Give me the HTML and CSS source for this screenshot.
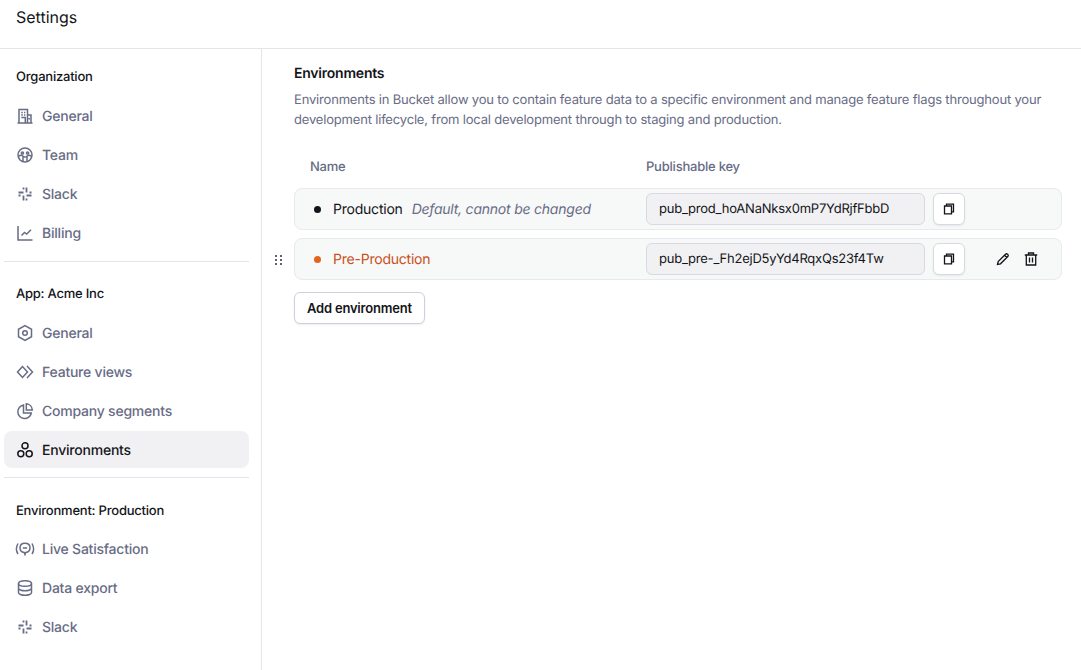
FILE: index.html
```html
<!DOCTYPE html>
<html lang="en">
<head>
  <meta charset="UTF-8" />
  <title>Settings</title>
  <link rel="stylesheet" href="styles.css">
</head>
<body>
  <header class="top-bar">Settings</header>

  <div class="layout">
    <nav class="sidebar">
      <div class="nav-section first">
        <h3>Organization</h3>
        <a class="nav-item">
          <svg class="icon" viewBox="0 0 16 16"><path d="M.5 15h15M2 15V1.500h8.500V15M10.500 7H14v8M4.300 4.500h1.500M7 4.500h1.300M4.300 7h1.500M7 7h1.300M4.300 9.500h4v5.500M12.200 10v1.500"/></svg>
          General
        </a>
        <a class="nav-item">
          <svg class="icon" viewBox="0 0 16 16"><circle cx="8" cy="8" r="7"/><circle cx="5.400" cy="6" r="1.100"/><circle cx="10.600" cy="6" r="1.100"/><path d="M1.500 9.500c1.500-1.400 3.300-1.400 4.500-.4.600.5 1 .9 2 .9s1.400-.4 2-.9c1.200-1 3-1 4.500.4M6 9.300v5.200M10 9.300v5.200"/></svg>
          Team
        </a>
        <a class="nav-item">
          <svg class="icon slack" viewBox="0 0 16 16"><path d="M1.500 6.500h5M6.500 1.500v2M9.500 1.500v5M14.500 6.500h-2M14.500 9.500h-5M9.500 14.500v-2M6.500 14.500v-5M1.500 9.500h2"/></svg>
          Slack
        </a>
        <a class="nav-item">
          <svg class="icon" viewBox="0 0 16 16"><path d="M1 1v14h14.500M4.500 10.500l3-3 2.200 1.500 4.300-4.300"/></svg>
          Billing
        </a>
      </div>

      <div class="nav-section app">
        <h3>App: Acme Inc</h3>
        <a class="nav-item">
          <svg class="icon" viewBox="0 0 16 16"><path d="M8 .6l6.500 3.700v7.400L8 15.400l-6.500-3.700V4.300z"/><circle cx="8" cy="8" r="2.300"/></svg>
          General
        </a>
        <a class="nav-item">
          <svg class="icon" viewBox="0 0 16 16"><path d="M5.500 2.500L.5 8l5 5.500L10.500 8zM10 2l5.500 6-5.500 6"/></svg>
          Feature views
        </a>
        <a class="nav-item">
          <svg class="icon" viewBox="0 0 16 16"><path d="M6.500 2a6.800 6.800 0 1 0 7.800 8H6.500zM9.300.8a6.500 6.500 0 0 1 6 6.200h-6z"/></svg>
          Company segments
        </a>
        <a class="nav-item active">
          <svg class="icon" viewBox="0 0 16 16"><circle cx="8" cy="3.800" r="3"/><circle cx="3.800" cy="11.800" r="3"/><circle cx="12.200" cy="11.800" r="3"/></svg>
          Environments
        </a>
      </div>

      <div class="nav-section last">
        <h3>Environment: Production</h3>
        <a class="nav-item">
          <svg class="icon" viewBox="0 0 16 16"><path d="M1 2.500C-1 6-1 10 1 13M15 2.500c2 3.500 2 7.500 0 10.500M8 2.200c-3 0-5 1.900-5 4.600 0 2.500 1.800 4.400 4.200 4.700l.8 2 .8-2c2.400-.3 4.200-2.200 4.200-4.700 0-2.700-2-4.600-5-4.600zM5.800 7h4.400"/></svg>
          Live Satisfaction
        </a>
        <a class="nav-item">
          <svg class="icon" viewBox="0 0 16 16"><ellipse cx="8" cy="3.500" rx="6.500" ry="2.800"/><path d="M1.500 3.500v9c0 1.500 2.900 2.800 6.500 2.800s6.500-1.300 6.500-2.800v-9M1.500 8c0 1.500 2.900 2.800 6.500 2.800s6.500-1.300 6.500-2.800"/></svg>
          Data export
        </a>
        <a class="nav-item">
          <svg class="icon slack" viewBox="0 0 16 16"><path d="M1.500 6.500h5M6.500 1.500v2M9.500 1.500v5M14.500 6.500h-2M14.500 9.500h-5M9.500 14.500v-2M6.500 14.500v-5M1.500 9.500h2"/></svg>
          Slack
        </a>
      </div>
    </nav>

    <main class="content">
      <h2>Environments</h2>
      <p class="intro">Environments in Bucket allow you to contain feature data to a specific environment and manage feature flags throughout your development lifecycle, from local development through to staging and production.</p>

      <div class="table-head">
        <span class="col-name">Name</span>
        <span>Publishable key</span>
      </div>

      <div class="env-row">
        <div class="col-name env-name">
          <span class="dot"></span>
          <span>Production</span>
          <em>Default, cannot be changed</em>
        </div>
        <div class="key-box">pub_prod_hoANaNksx0mP7YdRjfFbbD</div>
        <button class="copy-btn">
          <svg class="small-icon" viewBox="0 0 12 12"><path d="M3.500 3V1.200h7v7.600H8.500M1.500 3h7v7.800h-7z"/></svg>
        </button>
      </div>

      <div class="env-row">
        <span class="drag-handle">
          <svg viewBox="0 0 7 10" width="7" height="10"><g fill="#5d6170"><rect width="2" height="2"/><rect x="5" width="2" height="2"/><rect y="4" width="2" height="2"/><rect x="5" y="4" width="2" height="2"/><rect y="8" width="2" height="2"/><rect x="5" y="8" width="2" height="2"/></g></svg>
        </span>
        <div class="col-name env-name pre">
          <span class="dot"></span>
          <span>Pre-Production</span>
        </div>
        <div class="key-box">pub_pre-_Fh2ejD5yYd4RqxQs23f4Tw</div>
        <button class="copy-btn">
          <svg class="small-icon" viewBox="0 0 12 12"><path d="M3.500 3V1.200h7v7.600H8.500M1.500 3h7v7.800h-7z"/></svg>
        </button>
        <div class="row-actions">
          <svg class="action-icon" viewBox="0 0 14 14"><path d="M1.500 12.500l.7-3L9.500 2.200c.6-.6 1.400-.6 2 0l.3.300c.6.600.6 1.400 0 2L4.500 11.800zM8.500 3.200l2.300 2.300"/></svg>
          <svg class="action-icon" viewBox="0 0 14 14"><path d="M.8 3h12.400M4.500 3V1h5v2M2.300 3v10h9.400V3M5.500 5.500v5M8.500 5.500v5"/></svg>
        </div>
      </div>

      <button class="add-btn">Add environment</button>
    </main>
  </div>
</body>
</html>
```

FILE: styles.css
```css
* {
  box-sizing: border-box;
}

html, body {
  height: 100%;
}

body {
  margin: 0;
  font-family: 'Inter', 'Liberation Sans', sans-serif;
  font-size: 14px;
  color: #14151a;
  background: #fff;
  overflow: hidden;
  text-rendering: geometricPrecision;
  letter-spacing: -0.016em;
}

.top-bar {
  height: 49px;
  padding: 7px 16px 0;
  font-size: 16px;
  line-height: 20px;
  letter-spacing: 0;
  border-bottom: 1px solid #e4e5e9;
}

.layout {
  display: flex;
  height: 621px;
}

.sidebar {
  width: 262px;
  flex-shrink: 0;
  padding: 0 12px 0 4px;
  border-right: 1px solid #e4e5e9;
}

.nav-section {
  padding: 22px 0 10px;
  border-bottom: 1px solid #e4e5e9;
}

.nav-section.first {
  padding-top: 18px;
}

.nav-section.app {
  padding-bottom: 9px;
}

.nav-section.last {
  padding-top: 23px;
  border-bottom: none;
}

.nav-section h3 {
  margin: 0 0 10px;
  padding-left: 12px;
  font-size: 13px;
  font-weight: 500;
  line-height: 20px;
}

.nav-section.last h3 {
  margin-bottom: 9px;
}

.nav-item {
  display: flex;
  align-items: center;
  gap: 9px;
  height: 37px;
  margin-top: 2px;
  padding: 2px 12px 0 13px;
  border-radius: 8px;
  font-size: 14px;
  font-weight: 500;
  color: #686c85;
}

.nav-item:first-of-type {
  margin-top: 0;
}

.nav-item.active {
  background: #f1f1f3;
  color: #14151a;
}

.icon {
  width: 16px;
  height: 16px;
  margin-top: -2px;
  flex-shrink: 0;
  fill: none;
  stroke: currentColor;
  stroke-width: 1.500;
  overflow: visible;
}

.icon.slack {
  stroke-width: 1.800;
}

.content {
  flex: 1;
  padding: 15px 19px 0 32px;
}

.content h2 {
  margin: 0;
  font-size: 14px;
  font-weight: 600;
  line-height: 20px;
}

.intro {
  margin: 6px 0 0;
  font-size: 13px;
  line-height: 20px;
  letter-spacing: -0.014em;
  color: #686c85;
}

.table-head {
  display: flex;
  align-items: center;
  height: 20px;
  margin-top: 27px;
  padding-left: 16px;
  font-size: 13px;
  font-weight: 500;
  color: #686c85;
}

.table-head .col-name {
  width: 336px;
}

.env-row {
  position: relative;
  display: flex;
  align-items: center;
  height: 42px;
  margin-top: 8px;
  padding-left: 15px;
  background: #f7f8f8;
  border: 1px solid #e8e9ec;
  border-radius: 8px;
}

.table-head + .env-row {
  margin-top: 11px;
}

.env-name {
  display: flex;
  align-items: center;
  width: 336px;
  font-size: 14px;
}

.dot {
  width: 7px;
  height: 7px;
  margin: 0 12px 0 4px;
  border-radius: 50%;
  background: #14151a;
}

.env-name em {
  margin-left: 9px;
  color: #686c85;
}

.env-name.pre {
  color: #c9501c;
}

.env-name.pre .dot {
  background: #e2651f;
}

.key-box {
  width: 279px;
  height: 32px;
  padding-left: 12px;
  font-size: 13px;
  line-height: 30px;
  background: #f1f1f3;
  border: 1px solid #d8d9e2;
  border-radius: 6px;
}

.copy-btn {
  display: flex;
  align-items: center;
  justify-content: center;
  width: 32px;
  height: 32px;
  margin-left: 8px;
  padding: 0;
  background: #fff;
  border: 1px solid #d8d9e2;
  border-radius: 6px;
  box-shadow: 0 1px 2px rgba(20, 21, 40, 0.08);
}

.small-icon {
  width: 12px;
  height: 12px;
  fill: none;
  stroke: #14151a;
  stroke-width: 1.300;
}

.row-actions {
  display: flex;
  align-items: center;
  gap: 14px;
  margin-left: 31px;
}

.action-icon {
  width: 14px;
  height: 14px;
  fill: none;
  stroke: #14151a;
  stroke-width: 1.300;
}

.drag-handle {
  position: absolute;
  left: -20px;
  top: 16px;
  display: flex;
}

.add-btn {
  display: block;
  height: 32px;
  margin-top: 12px;
  padding: 0 12px;
  font-family: inherit;
  font-size: 13px;
  font-weight: 600;
  letter-spacing: -0.016em;
  color: #14151a;
  background: #fff;
  border: 1px solid #cfd0dc;
  border-radius: 6px;
  box-shadow: 0 1px 2px rgba(20, 21, 40, 0.08);
}
```
